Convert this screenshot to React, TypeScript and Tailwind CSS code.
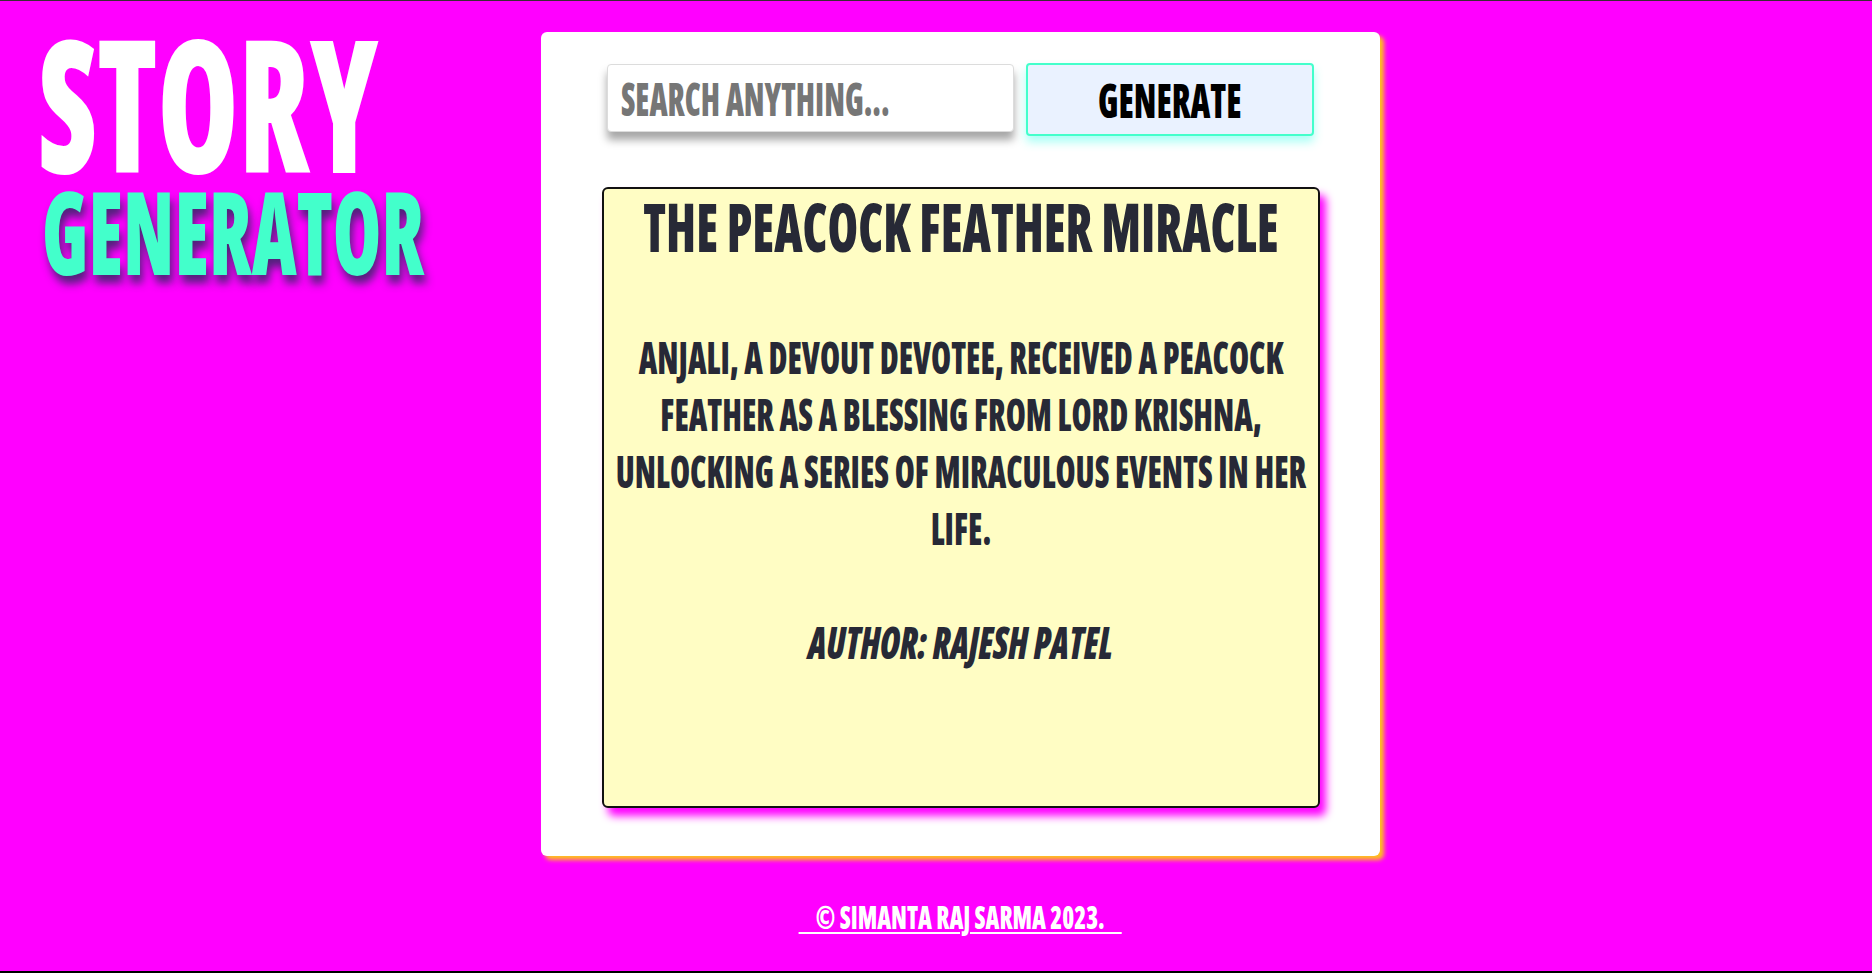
import React from "react";

export default function App() {
  return (
    <div className="min-h-[973px] w-full bg-[#ff00ff] border-t border-t-[#3b2d35] border-b-2 border-b-black flex font-['Open_Sans',sans-serif] font-stretch-condensed font-extrabold uppercase">
      <header className="w-[541px] shrink-0 pl-[38px] pt-[25px] flex flex-col items-start">
        <h1 className="text-[185px] leading-[150px] text-white inline-block scale-x-[0.706] origin-left whitespace-nowrap">
          Story
        </h1>
        <h2 className="mt-[4px] ml-[4px] text-[116px] leading-[100px] text-[#43ffcb] inline-block scale-x-[0.675] origin-left whitespace-nowrap [text-shadow:4px_8px_10px_rgba(50,40,100,0.85)]">
          Generator
        </h2>
      </header>

      <main className="flex flex-col items-center pt-[31px]">
        <section className="w-[839px] h-[824px] bg-white rounded-md shadow-[4px_4px_4px_#ffc21a] pt-[31px]">
          <div className="w-[707px] mx-auto flex gap-[12px] items-start">
            <div className="w-[407px] h-[68px] mt-[1px] bg-white border border-[#dcdcdc] rounded shadow-[0_8px_8px_rgba(0,0,0,0.35)] flex items-center pl-[13px] overflow-hidden">
              <span className="text-[46px] leading-none text-[#767676] inline-block scale-x-[0.688] origin-left whitespace-nowrap">
                Search anything...
              </span>
            </div>
            <button className="w-[288px] h-[73px] bg-[#eaf2ff] border-2 border-[#43ffcb] rounded shadow-[0_6px_10px_rgba(67,255,235,0.45)] flex items-center justify-center">
              <span className="text-[48px] leading-none text-black uppercase font-extrabold inline-block scale-x-[0.72] whitespace-nowrap">
                Generate
              </span>
            </button>
          </div>

          <article className="w-[718px] h-[621px] mx-auto mt-[51px] bg-[#fffdc4] border-2 border-[#111111] rounded-md shadow-[6px_8px_8px_#ff00ff] pt-[4px] text-[#272936] flex flex-col items-center">
            <h3 className="text-[67px] leading-none inline-block scale-x-[0.737] whitespace-nowrap">
              The Peacock Feather Miracle
            </h3>
            <div className="w-full flex justify-center mt-[69px]">
              <p className="w-[950px] shrink-0 text-center text-[43.5px] leading-[57px] scale-x-[0.744]">
                Anjali, a devout devotee, received a peacock
                <br />
                feather as a blessing from Lord Krishna,
                <br />
                unlocking a series of miraculous events in her
                <br />
                life.
              </p>
            </div>
            <p className="mt-[57px] text-[43.5px] leading-[57px] italic inline-block scale-x-[0.8] whitespace-nowrap">
              Author: Rajesh Patel
            </p>
          </article>
        </section>

        <footer className="mt-[46px]">
          <a className="text-[31px] leading-none text-white underline decoration-2 underline-offset-[3px] inline-block scale-x-[0.78] whitespace-pre">
            {"\u00a0\u00a0\u00a0\u00a0© Simanta Raj Sarma 2023.\u00a0\u00a0\u00a0\u00a0"}
          </a>
        </footer>
      </main>
    </div>
  );
}
